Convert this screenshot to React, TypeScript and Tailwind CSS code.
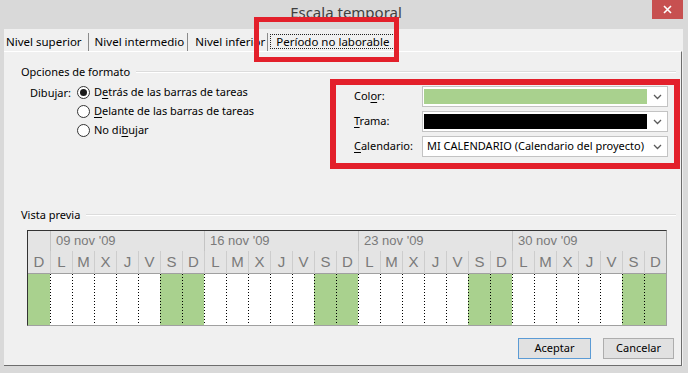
import React from "react";

const week = ["L", "M", "X", "J", "V", "S", "D"];
const days = ["D", ...week, ...week, ...week, ...week];
const dates = ["09 nov '09", "16 nov '09", "23 nov '09", "30 nov '09"];

function Chevron() {
  return (
    <svg width="9" height="6" viewBox="0 0 9 6" className="shrink-0">
      <polyline points="1,1 4.5,4.5 8,1" fill="none" stroke="#5a5a5a" strokeWidth="1.3" />
    </svg>
  );
}

function GroupHeader({ title }: { title: string }) {
  return (
    <div className="flex h-[16px] items-center pl-[17px] pr-[5px]">
      <span className="leading-[16px]">{title}</span>
      <div className="ml-[6px] h-[2px] flex-1 border-t border-b border-t-[#dcdcdc] border-b-white" />
    </div>
  );
}

function Radio({ checked, children }: { checked?: boolean; children: React.ReactNode }) {
  return (
    <div className="flex h-[19px] items-center gap-[4px]">
      <span className="flex h-[13px] w-[13px] items-center justify-center rounded-full border border-[#333] bg-white">
        {checked && <span className="h-[7px] w-[7px] rounded-full bg-[#1a1a1a]" />}
      </span>
      <span>{children}</span>
    </div>
  );
}

function FieldRow({ label, children }: { label: React.ReactNode; children: React.ReactNode }) {
  return (
    <div className="flex items-center">
      <span className="w-[68px]">{label}</span>
      <div className="flex h-[21px] w-[246px] items-center border border-[#c3c3c3] bg-white pr-[5px]">
        {children}
      </div>
    </div>
  );
}

// dotted day separator in the preview body
function DotLine() {
  return (
    <svg width="1" height="51" className="shrink-0">
      <line x1="0.5" y1="0" x2="0.5" y2="51" stroke="#000" strokeWidth="1" strokeDasharray="1 2" />
    </svg>
  );
}

export default function App() {
  return (
    <div className="relative h-[373px] w-[688px] overflow-hidden bg-[#d9d9d9] font-['Segoe_UI','Noto_Sans',sans-serif] text-[11px] text-black">
      {/* title bar */}
      <div className="relative flex h-[29px] justify-center">
        <span className="pt-[2px] pl-[4px] text-[15px] leading-[20px] text-[#404040]">Escala temporal</span>
        <div className="absolute right-[5px] top-0 flex h-[19px] w-[31px] items-center justify-center bg-[#c75050]">
          <svg width="9" height="9" viewBox="0 0 9 9">
            <path d="M1 1 L8 8 M8 1 L1 8" stroke="white" strokeWidth="1.6" />
          </svg>
        </div>
      </div>

      {/* client */}
      <div className="ml-[4px] w-[679px] bg-[#f0f0f0]">
        {/* tabs */}
        <div className="flex h-[22px] items-end whitespace-nowrap text-[11.5px]">
          <div className="flex h-[18px] items-center border-r border-[#8a8a8a] pl-[2px] pr-[6px]">Nivel superior</div>
          <div className="flex h-[18px] items-center border-r border-[#8a8a8a] pl-[6px] pr-[3px]">Nivel intermedio</div>
          <div className="flex h-[18px] items-center border-r border-[#8a8a8a] pl-[7px] pr-[2px]">Nivel inferior</div>
          <div className="flex h-[20px] items-center border-r border-[#6e6e6e] pl-[2px] pr-[2px]">
            <span className="border border-dotted border-[#222] px-[5px] leading-[13px]">Período no laborable</span>
          </div>
        </div>

        {/* tab page */}
        <div className="w-[678px] border-t border-r border-b border-t-white border-r-[#6d6d6d] border-b-[#6d6d6d]">
          <div className="pt-[12px]">
            <GroupHeader title="Opciones de formato" />
          </div>

          <div className="mt-[3px] flex">
            <div className="flex pl-[26px]">
              <span className="w-[47px] leading-[19px]">Dibujar:</span>
              <div className="flex flex-col">
                <Radio checked>
                  D<u className="underline-offset-2">e</u>trás de las barras de tareas
                </Radio>
                <Radio>
                  <u className="underline-offset-2">D</u>elante de las barras de tareas
                </Radio>
                <Radio>
                  No di<u className="underline-offset-2">b</u>ujar
                </Radio>
              </div>
            </div>

            <div className="ml-auto mr-[13px] mt-[3px] flex w-[314px] flex-col gap-[4px]">
              <FieldRow label={<>Col<u className="underline-offset-2">o</u>r:</>}>
                <div className="ml-[1px] h-[15px] w-[223px] bg-[#a9d18e]" />
                <div className="flex-1" />
                <Chevron />
              </FieldRow>
              <FieldRow label={<><u className="underline-offset-2">T</u>rama:</>}>
                <div className="ml-[1px] h-[15px] w-[223px] bg-black" />
                <div className="flex-1" />
                <Chevron />
              </FieldRow>
              <FieldRow label={<><u className="underline-offset-2">C</u>alendario:</>}>
                <span className="pl-[4px] text-[11px]">MI CALENDARIO (Calendario del proyecto)</span>
                <div className="flex-1" />
                <Chevron />
              </FieldRow>
            </div>
          </div>

          <div className="mt-[50px]">
            <GroupHeader title="Vista previa" />
          </div>

          {/* preview */}
          <div className="ml-[23px] mt-[7px] h-[96px] w-[640px] border border-t-[#333] border-l-[#333] border-r-[#a0a0a0] border-b-[#a0a0a0] font-['Liberation_Sans',Arial,sans-serif] text-[#7a7a7a]">
            <div className="border-b border-[#a0a0a0] bg-[#e4e4e4]">
              <div className="grid h-[20px] grid-cols-[repeat(29,minmax(0,1fr))] text-[13px]">
                <div />
                {dates.map((d) => (
                  <div key={d} className="col-span-7 flex items-center border-l border-[#c4c4c4] pl-[5px]">
                    {d}
                  </div>
                ))}
              </div>
              <div className="grid h-[22px] grid-cols-[repeat(29,minmax(0,1fr))] text-[15px]">
                {days.map((d, i) => (
                  <div
                    key={i}
                    className={`flex items-center justify-center ${i > 0 ? "border-l border-[#cdcdcd]" : ""}`}
                  >
                    {d}
                  </div>
                ))}
              </div>
            </div>
            <div className="grid h-[51px] grid-cols-[repeat(29,minmax(0,1fr))]">
              {days.map((d, i) => (
                <div key={i} className={`flex ${d === "S" || d === "D" ? "bg-[#a9d18e]" : "bg-white"}`}>
                  {i > 0 && <DotLine />}
                </div>
              ))}
            </div>
          </div>

          {/* buttons */}
          <div className="mt-[12px] flex justify-end gap-[12px] pb-[6px] pr-[7px]">
            <button className="h-[21px] w-[73px] border border-[#5b9bd5] bg-[#e1e1e1] text-[11px]">Aceptar</button>
            <button className="h-[21px] w-[71px] border border-[#adadad] bg-[#e1e1e1] text-[11px]">Cancelar</button>
          </div>
        </div>
      </div>

      {/* annotation boxes */}
      <div className="absolute left-[254px] top-[17px] h-[45px] w-[145px] border-[5px] border-[#e3202b]" />
      <div className="absolute left-[330px] top-[79px] h-[90px] w-[350px] border-[6px] border-[#e3202b]" />
    </div>
  );
}
